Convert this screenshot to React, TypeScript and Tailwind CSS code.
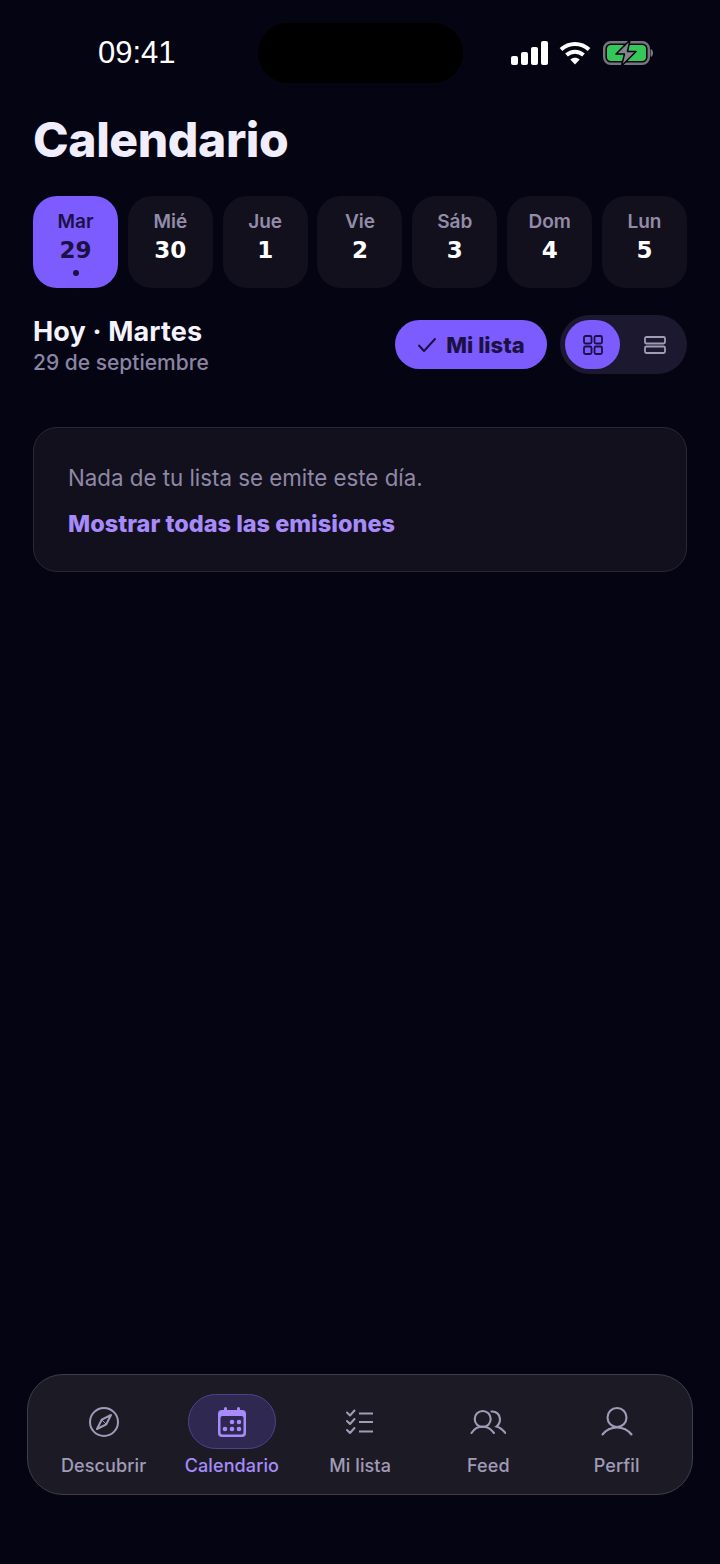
import React from "react";

const days = [
  ["Mié", "30"],
  ["Jue", "1"],
  ["Vie", "2"],
  ["Sáb", "3"],
  ["Dom", "4"],
  ["Lun", "5"],
];

const numFont = { fontFamily: "'DejaVu Sans', sans-serif" };

function Compass() {
  return (
    <svg width="32" height="32" viewBox="0 0 32 32" fill="none" stroke="#a29bb8" strokeWidth="2" strokeLinejoin="round">
      <circle cx="16" cy="16" r="14" />
      <path d="M23 9 18.300 18.300 9 23 13.700 13.700Z" />
      <path d="M13.700 13.700 18.300 18.300" strokeWidth="1" />
    </svg>
  );
}

function CalendarIcon() {
  return (
    <svg width="32" height="32" viewBox="0 0 32 32" fill="none">
      <rect x="2" y="4" width="28" height="27" rx="4" fill="#a78bfa" />
      <rect x="8" y="1" width="3" height="6" rx="1.500" fill="#a78bfa" />
      <rect x="21" y="1" width="3" height="6" rx="1.500" fill="#a78bfa" />
      <rect x="4.500" y="10" width="23" height="18.500" rx="2" fill="#2f2850" />
      <g fill="#a78bfa">
        <circle cx="16" cy="16" r="2.300" />
        <circle cx="23" cy="16" r="2.300" />
        <circle cx="9" cy="23" r="2.300" />
        <circle cx="16" cy="23" r="2.300" />
        <circle cx="23" cy="23" r="2.300" />
      </g>
    </svg>
  );
}

function ListIcon() {
  return (
    <svg width="32" height="32" viewBox="0 0 32 32" fill="none" stroke="#a29bb8" strokeWidth="2" strokeLinecap="round" strokeLinejoin="round">
      <path d="M3 6.500 6 9.500 10.500 4.500M3 15 6 18 10.500 13M3 24 6 27 10.500 22" />
      <path d="M15 7.500H29M15 16H29M15 25.500H29" strokeLinecap="butt" />
    </svg>
  );
}

function FeedIcon() {
  return (
    <svg width="36" height="32" viewBox="0 0 36 32" fill="none" stroke="#a29bb8" strokeWidth="2.100" strokeLinecap="round">
      <circle cx="12.700" cy="13" r="8" />
      <path d="M1.500 27C4 23 8 20.500 12.700 20.500S21 23 24 27" />
      <path d="M21.500 5.500C26 5 30 8.500 30 13C30 16.500 28.500 19 26.500 20.500C30 21.500 33 24 35.500 27" />
    </svg>
  );
}

function UserIcon() {
  return (
    <svg width="32" height="32" viewBox="0 0 32 32" fill="none" stroke="#a29bb8" strokeWidth="2.100" strokeLinecap="round">
      <circle cx="16" cy="11.500" r="9.500" />
      <path d="M1.500 28.500C5 24 10 21.500 16 21.500S27 24 30.500 28.500" />
    </svg>
  );
}

function NavItem({ label, active, children }: { label: string; active?: boolean; children: React.ReactNode }) {
  return (
    <div className="flex flex-col items-center w-[128.25px]">
      <div
        className={
          "flex items-center justify-center w-[88px] h-[55px] rounded-full border " +
          (active ? "bg-[#2f2850] border-[#4c4390]" : "border-transparent")
        }
      >
        {children}
      </div>
      <span className={"mt-[3px] text-[18px] leading-[28px] font-medium tracking-[0.1px] " + (active ? "text-[#a78bfa]" : "text-[#a29bb8]")}>
        {label}
      </span>
    </div>
  );
}

export default function App() {
  return (
    <div
      className="w-[720px] h-[1564px] bg-[#050412] flex flex-col overflow-hidden"
      style={{ fontFamily: "Inter, 'Noto Sans', sans-serif" }}
    >
      <div className="flex items-center h-[60px] mt-[23px] shrink-0">
        <div className="w-[258px] pl-[98px] text-white text-[31px] leading-[60px] -mt-[1px]" style={{ fontFamily: "'Liberation Sans', sans-serif" }}>
          09:41
        </div>
        <div className="w-[205px] h-[60px] rounded-[30px] bg-black" />
        <div className="flex items-center pl-[48px] gap-[11px] -mt-[1px]">
          <svg width="37" height="24" viewBox="0 0 37 24" fill="white">
            <rect x="0" y="15" width="7" height="9" rx="2" />
            <rect x="10" y="11" width="7" height="13" rx="2" />
            <rect x="20" y="6" width="7" height="18" rx="2" />
            <rect x="30" y="0" width="7" height="24" rx="2" />
          </svg>
          <svg width="32" height="24" viewBox="0 0 32 24" fill="none" stroke="white" strokeWidth="4">
            <path d="M2 8.500C10 1 22 1 30 8.500" />
            <path d="M7.500 14C12.500 9.500 19.500 9.500 24.500 14" />
            <path d="M16 23.500 11.300 18.500C14 16 18 16 20.700 18.500Z" fill="white" stroke="none" />
          </svg>
          <svg width="51" height="26" viewBox="0 0 51 26" fill="none" className="ml-[1px]">
            <rect x="1.200" y="2.200" width="44.600" height="21.600" rx="6.500" stroke="#77767c" strokeWidth="2.400" />
            <rect x="4" y="5" width="39" height="16" rx="4" fill="#34c759" />
            <path d="M48 9.500C50 10.500 50 15.500 48 16.500Z" fill="#77767c" stroke="#77767c" />
            <path d="M27 0 13 14H21.500L18.500 26 33 11.500H24.500Z" fill="#85848a" stroke="#050412" strokeWidth="1.500" strokeLinejoin="round" />
          </svg>
        </div>
      </div>

      <h1 className="mt-[27px] pl-[33px] text-[48px] leading-[60px] font-extrabold text-[#f0eefc] tracking-[-0.4px] shrink-0">
        Calendario
      </h1>

      <div className="mt-[26px] px-[33px] flex justify-between shrink-0">
        <div className="w-[85px] h-[92px] rounded-[24px] bg-[#7c5cff] flex flex-col items-center">
          <span className="mt-[14px] text-[19px] leading-[24px] font-semibold text-[#1b1145]">Mar</span>
          <span className="mt-[1px] text-[23px] leading-[30px] font-bold text-[#1b1145]" style={numFont}>29</span>
          <span className="mt-[5px] w-[6px] h-[6px] rounded-full bg-[#1b1145]" />
        </div>
        {days.map(([d, n]) => (
          <div key={d} className="w-[85px] h-[92px] rounded-[24px] bg-[#12101d] flex flex-col items-center">
            <span className="mt-[14px] text-[19px] leading-[24px] font-semibold text-[#938ca9]">{d}</span>
            <span className="mt-[1px] text-[23px] leading-[30px] font-bold text-white" style={numFont}>{n}</span>
          </div>
        ))}
      </div>

      <div className="mt-[27px] px-[33px] flex items-center justify-between shrink-0">
        <div className="flex flex-col h-[59px] pt-[1px]">
          <span className="text-[27px] leading-[32px] font-bold text-[#f5f3ff] tracking-[0.15px]">Hoy · Martes</span>
          <span className="mt-[2px] text-[21px] leading-[26px] font-medium text-[#8b84a3]">29 de septiembre</span>
        </div>
        <div className="flex items-center gap-[13px]">
          <div className="w-[152px] h-[49px] rounded-full bg-[#7c5cff] flex items-center justify-center gap-[9px]">
            <svg width="20" height="16" viewBox="0 0 20 16" fill="none" stroke="#1b1145" strokeWidth="2" strokeLinecap="round" strokeLinejoin="round">
              <path d="M2 8.500 7 14 18 2" />
            </svg>
            <span className="text-[22px] leading-[28px] font-extrabold text-[#1b1145]">Mi lista</span>
          </div>
          <div className="w-[127px] h-[59px] rounded-full bg-[#1c1830] p-[5px] flex items-center">
            <div className="w-[55px] h-[49px] rounded-full bg-[#7c5cff] flex items-center justify-center">
              <svg width="20" height="20" viewBox="0 0 20 20" fill="none" stroke="#1b1145" strokeWidth="1.800">
                <rect x="1" y="1" width="7.500" height="7.500" rx="1.500" />
                <rect x="11.500" y="1" width="7.500" height="7.500" rx="1.500" />
                <rect x="1" y="11.500" width="7.500" height="7.500" rx="1.500" />
                <rect x="11.500" y="11.500" width="7.500" height="7.500" rx="1.500" />
              </svg>
            </div>
            <div className="flex-1 flex items-center justify-center pl-[7px]">
              <svg width="22" height="18" viewBox="0 0 22 18" fill="none" stroke="#a29bb8" strokeWidth="1.800">
                <rect x="1" y="1" width="20" height="6.500" rx="1.500" />
                <rect x="1" y="10.500" width="20" height="6.500" rx="1.500" />
              </svg>
            </div>
          </div>
        </div>
      </div>

      <div className="mt-[53px] mx-[33px] h-[145px] rounded-[24px] bg-[#12101d] border border-[#2a2837] px-[34px] pt-[33px] shrink-0">
        <p className="text-[22.300px] leading-[34px] font-normal text-[#8f88a6]">Nada de tu lista se emite este día.</p>
        <p className="mt-[12px] text-[23.500px] leading-[34px] font-extrabold text-[#a78bfa]">Mostrar todas las emisiones</p>
      </div>

      <div className="flex-1" />

      <div className="mb-[69px] mx-[27px] h-[121px] rounded-[36px] bg-[#1c1b25] border border-[#3f3d4a] flex items-start pt-[19px] shrink-0 pl-[11.500px]">
        <NavItem label="Descubrir"><Compass /></NavItem>
        <NavItem label="Calendario" active><CalendarIcon /></NavItem>
        <NavItem label="Mi lista"><ListIcon /></NavItem>
        <NavItem label="Feed"><FeedIcon /></NavItem>
        <NavItem label="Perfil"><UserIcon /></NavItem>
      </div>
    </div>
  );
}
